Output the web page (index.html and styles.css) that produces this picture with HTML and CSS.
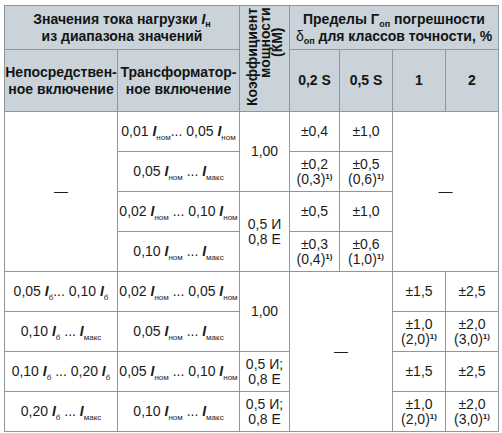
FILE: index.html
```html
<!DOCTYPE html>
<html lang="ru">
<head>
<meta charset="utf-8">
<title>Пределы погрешности</title>
<link rel="stylesheet" href="styles.css">
</head>
<body>
<table class="t">
<colgroup><col class="c1"><col class="c2"><col class="c3"><col class="c4"><col class="c5"><col class="c6"><col class="c7"></colgroup>
<thead>
<tr class="h1">
<th colspan="2">Значения тока нагрузки <i class="I">I</i><sub class="hs">н</sub><br>из диапазона значений</th>
<th rowspan="2" class="km"><div class="vt"><span class="l1">Коэффициент</span><span class="l23"><span class="in">мощности<br>(КМ)</span></span></div></th>
<th colspan="4">Пределы Γ<sub class="hs">оп</sub> погрешности<br><span class="delta">δ</span><sub class="hs">оп</sub> для классов точности, %</th>
</tr>
<tr class="h2">
<th>Непосредствен-<br>ное включение</th>
<th>Трансформатор-<br>ное включение</th>
<th>0,2 S</th><th>0,5 S</th><th>1</th><th>2</th>
</tr>
</thead>
<tbody>
<tr class="r1">
<td rowspan="4">—</td>
<td>0,01 <i class="I">I</i><sub>ном</sub>... 0,05 <i class="I">I</i><sub>ном</sub></td>
<td rowspan="2">1,00</td>
<td>±0,4</td><td>±1,0</td>
<td rowspan="4" colspan="2">—</td>
</tr>
<tr class="r2">
<td>0,05 <i class="I">I</i><sub>ном</sub> ... <i class="I">I</i><sub>макс</sub></td>
<td class="two">±0,2<br>(0,3)<sup>1)</sup></td><td class="two">±0,5<br>(0,6)<sup>1)</sup></td>
</tr>
<tr class="r3">
<td>0,02 <i class="I">I</i><sub>ном</sub> ... 0,10 <i class="I">I</i><sub>ном</sub></td>
<td rowspan="2" class="km2">0,5 И<br>0,8 Е</td>
<td>±0,5</td><td>±1,0</td>
</tr>
<tr class="r4">
<td>0,10 <i class="I">I</i><sub>ном</sub> ... <i class="I">I</i><sub>макс</sub></td>
<td class="two">±0,3<br>(0,4)<sup>1)</sup></td><td class="two">±0,6<br>(1,0)<sup>1)</sup></td>
</tr>
<tr class="r5">
<td>0,05 <i class="I">I</i><sub>б</sub>... 0,10 <i class="I">I</i><sub>б</sub></td>
<td>0,02 <i class="I">I</i><sub>ном</sub> ... 0,05 <i class="I">I</i><sub>ном</sub></td>
<td rowspan="2">1,00</td>
<td rowspan="4" colspan="2">—</td>
<td>±1,5</td><td>±2,5</td>
</tr>
<tr class="r6">
<td>0,10 <i class="I">I</i><sub>б</sub> ... <i class="I">I</i><sub>макс</sub></td>
<td>0,05 <i class="I">I</i><sub>ном</sub> ... <i class="I">I</i><sub>макс</sub></td>
<td class="two">±1,0<br>(2,0)<sup>1)</sup></td><td class="two">±2,0<br>(3,0)<sup>1)</sup></td>
</tr>
<tr class="r7">
<td>0,10 <i class="I">I</i><sub>б</sub> ... 0,20 <i class="I">I</i><sub>б</sub></td>
<td>0,05 <i class="I">I</i><sub>ном</sub> ... 0,10 <i class="I">I</i><sub>ном</sub></td>
<td class="two">0,5 И;<br>0,8 Е</td>
<td>±1,5</td><td>±2,5</td>
</tr>
<tr class="r8">
<td>0,20 <i class="I">I</i><sub>б</sub> ... <i class="I">I</i><sub>макс</sub></td>
<td>0,10 <i class="I">I</i><sub>ном</sub> ... <i class="I">I</i><sub>макс</sub></td>
<td class="two">0,5 И;<br>0,8 Е</td>
<td class="two">±1,0<br>(2,0)<sup>1)</sup></td><td class="two">±2,0<br>(3,0)<sup>1)</sup></td>
</tr>
</tbody>
</table>
</body>
</html>
```
FILE: styles.css
```css
html, body { margin: 0; padding: 0; background: #ffffff; }
body { padding: 5px 0 0 4px; font-family: "Liberation Sans", Arial, sans-serif; color: #1c1c1c; }

.t {
  border-collapse: collapse;
  table-layout: fixed;
  width: 494px;
  font-size: 14px;
}
.c1 { width: 113px; }
.c2 { width: 122px; }
.c3 { width: 50px; }
.c4 { width: 50px; }
.c5 { width: 53px; }
.c6 { width: 53px; }
.c7 { width: 53px; }

.t th, .t td {
  border: 1px solid #8d989e;
  padding: 0;
  text-align: center;
  vertical-align: middle;
}

.t thead th {
  background: #c9d3d9;
  font-weight: bold;
  font-size: 14px;
  line-height: 17px;
  color: #141414;
}
.h1 { height: 44px; }
.h2 { height: 62px; }

.t tbody tr { height: 40px; }
.t tbody td { line-height: 17px; white-space: nowrap; }
.t tbody td.two { line-height: 15px; }
.t tbody td.km2 { line-height: 15px; }

.I { font-weight: bold; font-style: italic; }
.t sub { font-size: 8px; vertical-align: -4px; line-height: 0; }
.t sub.hs { font-size: 9px; font-weight: bold; vertical-align: -3px; }
.t sup { font-size: 8px; vertical-align: 5px; line-height: 0; font-weight: bold; }
.delta { font-weight: normal; }

.km { padding: 0; }
.vt {
  display: inline-block;
  writing-mode: vertical-rl;
  transform: rotate(180deg);
  height: 100px;
  line-height: 12.5px;
  font-size: 14px;
}
.l1 { display: block; text-align: center; }
.l23 { display: block; text-align: end; }
.in { display: inline-block; text-align: center; }
```
